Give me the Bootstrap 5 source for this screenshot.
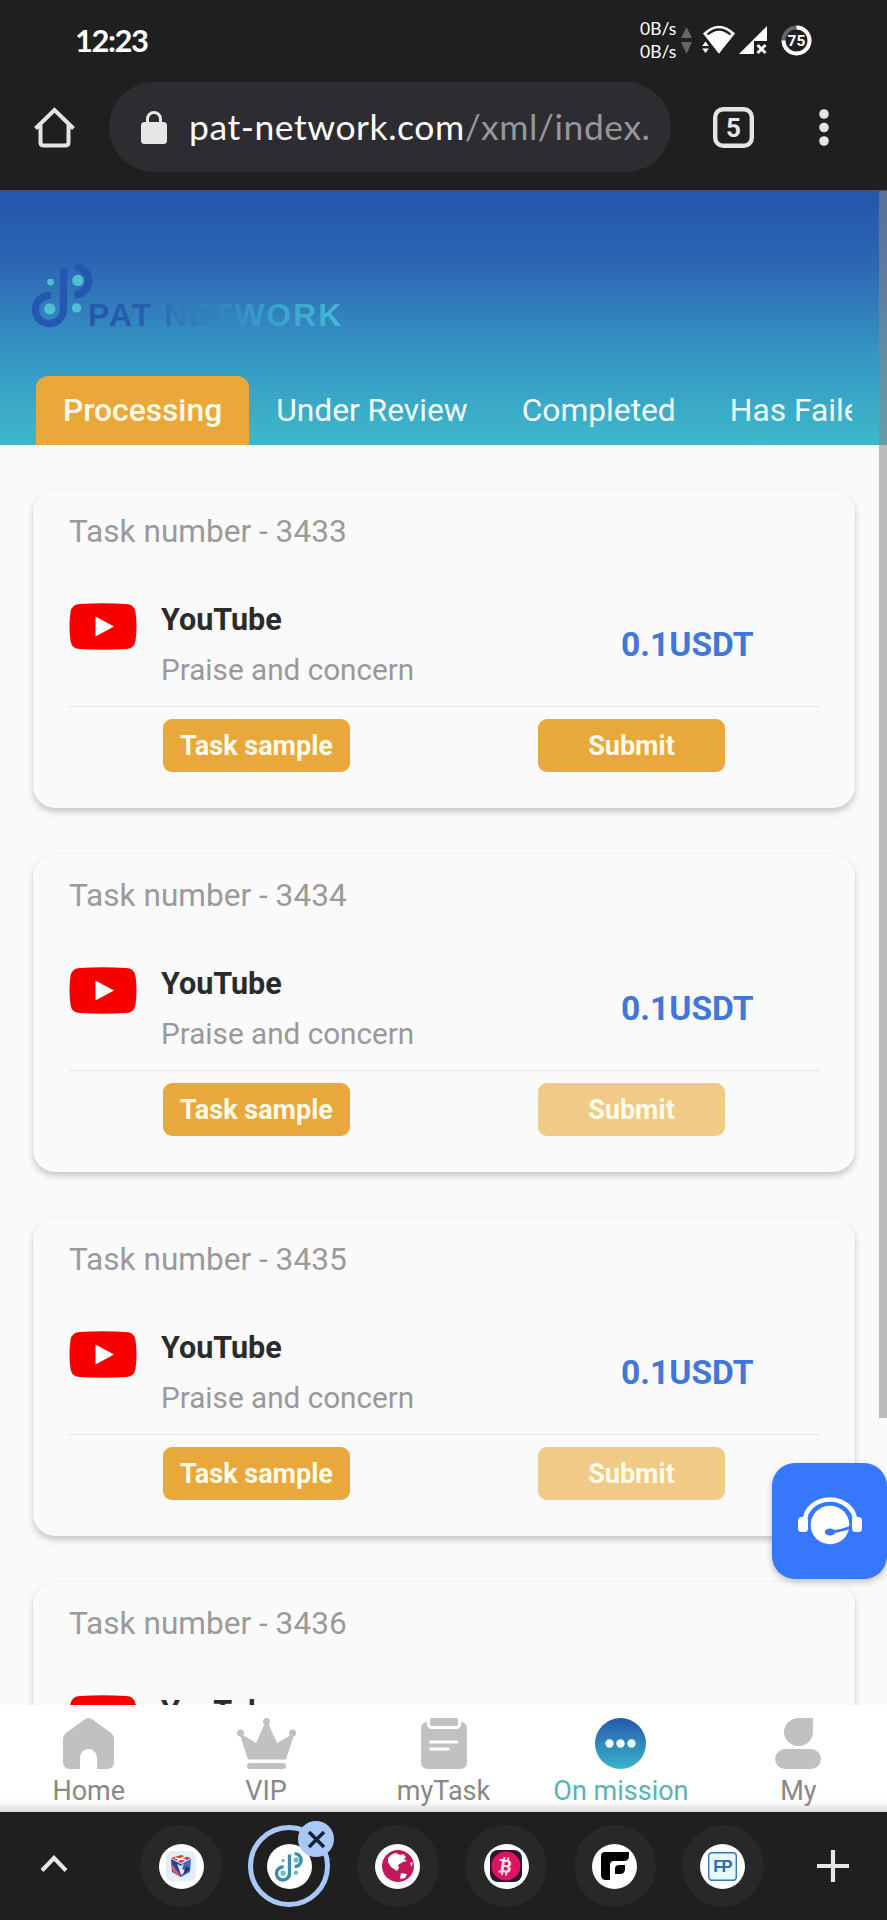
<!DOCTYPE html>
<html lang="en">
<head>
<meta charset="utf-8">
<meta name="viewport" content="width=device-width, initial-scale=1">
<title>PAT Network - On mission</title>
<link href="https://cdn.jsdelivr.net/npm/bootstrap@5.3.0/dist/css/bootstrap.min.css" rel="stylesheet">
<script src="https://cdn.jsdelivr.net/npm/bootstrap@5.3.0/dist/js/bootstrap.bundle.min.js" defer></script>
<style>
  html, body { height: 1920px; overflow: hidden; }
  body { font-family: Roboto, "Liberation Sans", sans-serif; background: #fafafa; }
  svg { display: block; flex: none; overflow: visible; }
  .chrome-top { height: 192px; background: #1f1f1f; border-bottom: 2px solid #454f6e; color: #fff; }
  .status { height: 82px; padding: 0 75px 0 75px; }
  .clock { font: 700 31px/38px Lato, sans-serif; letter-spacing: -1.5px; margin-top: -3px; }
  .rate { font: 400 17.5px/23px Lato, sans-serif; width: 38px; white-space: nowrap; margin-top: -2px; }
  .status svg { margin-top: -2px; }
  .toolbar { height: 90px; padding-left: 34px; }
  .omnibox { width: 562px; height: 90px; border-radius: 45px; background: #2d2c31; margin-left: 34px; padding-left: 32px; }
  .url { font: 400 35.5px/44px Lato, sans-serif; letter-spacing: .55px; margin-left: 22px; white-space: nowrap; }
  .url span { color: #97969b; }
  .site-head { height: 253px; padding: 69px 35px 0 30px; background: linear-gradient(#2356ae 0%, #2d66b4 28%, #3597c4 65%, #3fb8ca 100%); }
  .brand-name { font: 700 32px/36px "Liberation Sans", sans-serif; letter-spacing: 2px; color: transparent; margin: 36px 0 0 -9px; white-space: nowrap;
    background: linear-gradient(90deg, #2556ad 0%, #2760b0 24%, #3079b7 36%, #3287be 52%, #38a3ca 72%, #43b9d3 100%); -webkit-background-clip: text; background-clip: text; }
  .tabs { height: 69px; margin: 46px 0 0 6px; overflow: hidden; flex-wrap: nowrap; }
  .tabs a { font-size: 31.75px; line-height: 65px; color: #f2fdfd; padding: 2px 27px; white-space: nowrap; text-decoration: none; }
  .tabs a.on { background: #eba83a; border-radius: 12px 12px 0 0; font-weight: 500; color: #fffbe9; }
  .feed { height: 1260px; overflow: hidden; padding: 45px 32px 0 33px; gap: 46px; }
  .task { height: 318px; flex: none; border: 0; border-radius: 22px; background: #fafafa; padding: 22px 35px 0 36px; box-shadow: 0 4px 6px rgba(0,0,0,.2), 0 0 2px rgba(0,0,0,.05); }
  .task-no { font-size: 31.6px; line-height: 40px; color: #9a9a9a; }
  .media { height: 112px; margin-top: 43px; border-bottom: 1px solid #e4e6e8; font-size: 29.7px; line-height: 50px; }
  .media svg { margin-top: 8px; }
  .about { margin-left: 24px; width: 460px; color: #999; }
  .about strong { display: block; font-weight: 700; font-size: 30.5px; color: #2b2b2b; }
  .price { font-weight: 700; font-size: 33.6px; line-height: 100px; color: #4177d8; }
  .act { width: 187px; height: 53px; margin-top: 12px; padding: 0; border: 0; border-radius: 9px; background: #e9a83b; color: #fffbeb; font-weight: 700; font-size: 27px; line-height: 52px; }
  .act:disabled { background: #f0ca86; color: #fffbeb; opacity: 1; }
  .app-nav { height: 107px; padding-top: 13px; background: linear-gradient(#fff 0 90px, #fbfbfb 98px, #d8d8d8 107px); }
  .app-nav a { font-size: 27px; line-height: 32px; color: #888; text-decoration: none; }
  .app-nav a.on { color: #56b5b1; }
  .app-nav svg { height: 51px; margin-bottom: 6px; }
  .tabstrip { height: 108px; background: #1f1f1f; padding: 0 38px 0 40px; }
  .site { width: 82px; height: 82px; border-radius: 50%; background: #282828; margin-right: 26.4px; flex: none; }
  .site.on { background: #1f1f1f; border: 5px solid #a9c7f7; }
  .fav { width: 45px; height: 45px; border-radius: 50%; background: #fff; }
  .close-dot { width: 36px; height: 36px; border-radius: 50%; background: #a9c7f7; top: -9px; right: -9px; }
  .thumb { width: 8px; height: 1227px; top: 191px; right: 0; background: rgba(135,135,135,.55); }
  .fab { width: 115px; height: 116px; top: 1463px; right: 0; border-radius: 23px; background: #3777fb; box-shadow: 0 3px 7px rgba(0,0,0,.22); }
</style>
</head>
<body class="position-relative d-flex flex-column">
<svg width="0" height="0" class="position-absolute">
  <defs>
    <linearGradient id="sea" x1="0" y1="0" x2="0" y2="1"><stop offset="0" stop-color="#2559ae"/><stop offset="1" stop-color="#3ab5c8"/></linearGradient>
    <symbol id="yt" viewBox="0 0 68 47">
      <path fill="#f80000" d="M11 1Q34-.5 57 1Q65 1 66.500 9Q68.500 23 66.500 38Q65 46 57 46Q34 47.500 11 46Q3 46 1.500 38Q-.5 23 1.500 9Q3 1 11 1Z"/>
      <path fill="#fff" d="M26.500 13.500V33.500L45 23.500Z"/>
    </symbol>
    <symbol id="dp" viewBox="90 62 200 200">
      <g fill="none" stroke="currentColor" stroke-width="22">
        <path d="M190 84V207A42 42 0 1 1 152 165"/>
        <path d="M223 79A42 42 0 1 1 223 163"/>
      </g>
    </symbol>
  </defs>
</svg>

<header class="chrome-top">
  <div class="status d-flex align-items-center">
    <div class="clock">12:23</div>
    <div class="rate ms-auto">0B/s<br>0B/s</div>
    <svg width="11" height="27" viewBox="0 0 11 27" fill="#666" style="margin-left:3px"><path d="M5.500 0L11 11H0ZM5.500 27L11 15H0Z"/></svg>
    <svg width="34" height="30" viewBox="0 0 34 30" style="margin-left:10px">
      <path fill="#fff" d="M1 8.500Q17-7 33 8.500L17 28.500Z"/>
      <path d="M5.500 9.500Q17-.500 28.500 9.500" fill="none" stroke="#1f1f1f" stroke-width="2.200"/>
      <path d="M-1 15H5.500L11 22V30H-1Z" fill="#1f1f1f"/>
      <path fill="#fff" d="M8 17L17 28.500L19 26L12 15Z"/>
      <path d="M3.500 16.500L6.800 21H.2ZM3.500 28L6.800 23.500H.2Z" fill="#fff"/>
    </svg>
    <svg width="28" height="28" viewBox="0 0 28 28" style="margin-left:3px">
      <path fill="#fff" d="M28 0V15H15V28H0Z"/><path d="M18.500 19L26.500 27M26.500 19L18.500 27" stroke="#fff" stroke-width="3"/>
    </svg>
    <svg width="31" height="31" viewBox="0 0 31 31" style="margin-left:14px">
      <circle cx="15.500" cy="15.500" r="13" fill="none" stroke="#666" stroke-width="4"/>
      <path d="M15.500 2.500A13 13 0 1 1 2.500 15.500" fill="none" stroke="#fff" stroke-width="4"/>
      <text x="15.500" y="21" text-anchor="middle" font-family="Roboto" font-weight="700" font-size="15.500" fill="#fff">75</text>
    </svg>
  </div>
  <div class="toolbar d-flex align-items-center">
    <svg width="41" height="41" viewBox="0 0 41 41" fill="none" stroke="#e4e4e4" stroke-width="4"><path d="M1.500 21.500L20.500 3L39.500 21.500M6.500 18V35.500Q6.500 38.500 9.500 38.500H31Q34.500 38.500 34.500 35.500V18"/></svg>
    <div class="omnibox d-flex align-items-center">
      <svg width="26" height="33" viewBox="0 0 26 33"><rect y="11" width="26" height="22" rx="3.500" fill="#e6e6e6"/><path d="M6.500 12V8A6.500 6.500 0 0 1 19.500 8V12" fill="none" stroke="#e6e6e6" stroke-width="3"/></svg>
      <div class="url">pat-network.com<span>/xml/index.</span></div>
    </div>
    <svg width="41" height="41" viewBox="0 0 41 41" style="margin-left:42px"><rect x="2.200" y="2.200" width="36.600" height="36.600" rx="8" fill="none" stroke="#e4e4e4" stroke-width="4.400"/><text x="20.500" y="30" text-anchor="middle" font-family="Roboto" font-size="26" font-weight="700" fill="#e8e8e8">5</text></svg>
    <svg width="10" height="37" viewBox="0 0 10 37" fill="#e4e4e4" style="margin-left:65px"><circle cx="5" cy="5" r="4.800"/><circle cx="5" cy="18.500" r="4.800"/><circle cx="5" cy="32" r="4.800"/></svg>
  </div>
</header>

<section class="site-head">
  <div class="d-flex" style="height:69px">
    <svg width="67" height="67" viewBox="90 62 200 200"><use href="#dp" x="90" y="62" width="200" height="200" color="#2457b0"/>
      <g fill="#50bfd6"><circle cx="151" cy="125" r="10"/><circle cx="233" cy="120" r="17"/><circle cx="149" cy="205" r="17"/><circle cx="229" cy="202" r="14"/></g></svg>
    <div class="brand-name">PAT NETWORK</div>
  </div>
  <nav class="tabs d-flex">
    <a href="#" class="on">Processing</a><a href="#">Under Review</a><a href="#">Completed</a><a href="#">Has Failed</a>
  </nav>
</section>

<main class="feed d-flex flex-column">
  <article class="task card"><div class="task-no">Task number - 3433</div>
    <div class="media d-flex"><svg width="68" height="47"><use href="#yt"/></svg><div class="about"><strong>YouTube</strong>Praise and concern</div><div class="price">0.1USDT</div></div>
    <div class="d-flex justify-content-between" style="padding:0 95px 0 94px"><button class="btn act">Task sample</button><button class="btn act">Submit</button></div>
  </article>
  <article class="task card"><div class="task-no">Task number - 3434</div>
    <div class="media d-flex"><svg width="68" height="47"><use href="#yt"/></svg><div class="about"><strong>YouTube</strong>Praise and concern</div><div class="price">0.1USDT</div></div>
    <div class="d-flex justify-content-between" style="padding:0 95px 0 94px"><button class="btn act">Task sample</button><button class="btn act" disabled>Submit</button></div>
  </article>
  <article class="task card"><div class="task-no">Task number - 3435</div>
    <div class="media d-flex"><svg width="68" height="47"><use href="#yt"/></svg><div class="about"><strong>YouTube</strong>Praise and concern</div><div class="price">0.1USDT</div></div>
    <div class="d-flex justify-content-between" style="padding:0 95px 0 94px"><button class="btn act">Task sample</button><button class="btn act" disabled>Submit</button></div>
  </article>
  <article class="task card"><div class="task-no">Task number - 3436</div>
    <div class="media d-flex"><svg width="68" height="47"><use href="#yt"/></svg><div class="about"><strong>YouTube</strong></div></div>
  </article>
</main>

<nav class="app-nav d-flex position-relative">
  <a href="#" class="col d-flex flex-column align-items-center">
    <svg width="51" viewBox="0 0 51 51" fill="#c1c1c1"><path d="M21.500 1.500Q25.500-1.500 29.500 1.500L48 15Q51 17.500 51 21V44Q51 51 44 51H34V39.500A8.500 8.500 0 0 0 17 39.500V51H7Q0 51 0 44V21Q0 17.500 3 15Z"/></svg>Home</a>
  <a href="#" class="col d-flex flex-column align-items-center">
    <svg width="59" viewBox="0 0 59 51" fill="#c1c1c1"><circle cx="3.500" cy="15" r="3.500"/><circle cx="29.500" cy="3.500" r="3.500"/><circle cx="55.500" cy="15" r="3.500"/><path d="M28 5H31L40 25L54 17H57L49 41.500H11L3 17H6L19 25Z"/><rect x="10" y="45" width="39" height="6" rx="3"/></svg>VIP</a>
  <a href="#" class="col d-flex flex-column align-items-center">
    <svg width="46" viewBox="0 0 46 51"><path fill="#c1c1c1" d="M6 4V6Q6 11 11 11H35Q40 11 40 6V4Q46 5 46 10V44Q46 51 39 51H7Q0 51 0 44V10Q0 5 6 4Z"/><rect x="9" y="0" width="28" height="8" rx="2" fill="#c1c1c1"/><path d="M9.500 24H36M9.500 31H27" stroke="#fff" stroke-width="3" stroke-linecap="round"/></svg>myTask</a>
  <a href="#" class="on col d-flex flex-column align-items-center">
    <svg width="51" viewBox="0 0 51 51"><circle cx="25.500" cy="25.500" r="25.500" fill="url(#sea)"/><g fill="#eafcff"><circle cx="14.500" cy="25.500" r="4.200"/><circle cx="25.500" cy="25.500" r="4.200"/><circle cx="36.500" cy="25.500" r="4.200"/></g></svg>On mission</a>
  <a href="#" class="col d-flex flex-column align-items-center">
    <svg width="46" viewBox="0 0 46 51" fill="#c1c1c1"><path d="M24 0H38V14A14.500 14 0 1 1 24 0Z"/><rect y="31" width="46" height="20" rx="10"/></svg>My</a>
</nav>

<footer class="tabstrip d-flex align-items-center">
  <svg width="28" height="18" viewBox="0 0 28 18" fill="none" stroke="#e8e8e8" stroke-width="4" style="margin:0 72px 4px 0"><path d="M2 15.500L14 3L26 15.500"/></svg>
  <div class="site d-flex align-items-center justify-content-center"><div class="fav d-flex align-items-center justify-content-center">
    <svg width="30" height="30" viewBox="0 0 30 30"><rect width="30" height="30" rx="6" fill="#e2eef8"/><path d="M5 8L15 13V26L6 21Z" fill="#2b3f9c"/><path d="M25 8L15 13V26L24 21Z" fill="#3e6ac0"/><path d="M5 7L15 4L25 7L15 12Z" fill="#d8383b"/><path d="M9 7L20 9M20 5L11 10" stroke="#fff" stroke-width="1.500"/><path d="M5 12L12 21L15 26L7 21Z" fill="#e05a62"/><path d="M11 13L15 15L18 12L16 18L21 20L15 24L13 18Z" fill="#dbe6f8"/><path d="M20 15L24 18L17 24Z" fill="#33276f"/></svg></div></div>
  <div class="site on position-relative d-flex align-items-center justify-content-center"><div class="fav d-flex align-items-center justify-content-center">
    <svg width="31" height="31" viewBox="90 62 200 200"><use href="#dp" x="90" y="62" width="200" height="200" color="#3f8ba8"/><g fill="#63bfc8"><circle cx="149" cy="123" r="11"/><circle cx="233" cy="120" r="17"/><circle cx="149" cy="205" r="17"/><circle cx="232" cy="202" r="14"/></g></svg></div>
    <span class="close-dot position-absolute d-flex align-items-center justify-content-center"><svg width="17" height="17" viewBox="0 0 17 17" stroke="#14213a" stroke-width="3.500"><path d="M1 1L16 16M16 1L1 16"/></svg></span></div>
  <div class="site d-flex align-items-center justify-content-center"><div class="fav d-flex align-items-center justify-content-center">
    <svg width="32" height="32" viewBox="0 0 32 32"><circle cx="16" cy="16" r="16" fill="#c2185b"/><path fill="#fff" d="M6 8Q9 4 14 3L18 5L21 4L24 7L22 9L25 11L21 12L16 15L17 18L15 21L9 17L6 12Z"/><path fill="#fff" d="M19 23L25 24L23 28L18 29ZM28 13L30.500 12L30 17Z"/></svg></div></div>
  <div class="site d-flex align-items-center justify-content-center"><div class="fav d-flex align-items-center justify-content-center">
    <svg width="32" height="32" viewBox="0 0 32 32"><rect width="32" height="32" rx="8" fill="#24192f"/><circle cx="16" cy="16" r="14.500" fill="#e0115f"/><text x="16" y="22.500" text-anchor="middle" font-family="Roboto" font-size="18" font-weight="700" fill="#ffe1ec" transform="rotate(8 16 16)">B</text><path d="M14.500 7L14 11M18.500 7.500L18 11M12.500 21.500L12 25M16.500 22L16 25.500M9.500 10H13M8.500 21.500H12" stroke="#ffe1ec" stroke-width="1.800"/></svg></div></div>
  <div class="site d-flex align-items-center justify-content-center"><div class="fav d-flex align-items-center justify-content-center">
    <svg width="28" height="28" viewBox="0 0 28 28"><path d="M4 0H28V4Q28 9 23 9H13Q9 9 9 13V28H5Q0 28 0 23V4Q0 0 4 0ZM18 13H24V17Q24 22 19 22H14V17Q14 13 18 13Z"/></svg></div></div>
  <div class="site d-flex align-items-center justify-content-center"><div class="fav d-flex align-items-center justify-content-center">
    <svg width="29" height="29" viewBox="0 0 29 29"><rect x=".7" y=".7" width="27.600" height="27.600" rx="3" fill="#e9f8fd" stroke="#3b75b4" stroke-width="1.400"/><text x="14" y="19.500" text-anchor="middle" font-family="Liberation Sans" font-size="16.500" font-weight="700" letter-spacing="-1.700" fill="#2b6cb0">FP</text></svg></div></div>
  <svg class="ms-auto" width="32" height="32" viewBox="0 0 32 32" stroke="#e8e8e8" stroke-width="4.200"><path d="M0 16H32M16 0V32"/></svg>
</footer>

<div class="thumb position-absolute"></div>
<button class="fab position-absolute border-0 p-0 d-flex align-items-center justify-content-center" aria-label="Support">
  <svg width="64" height="48" viewBox="0 0 64 48"><path d="M7 24A25 21.500 0 0 1 57 24" fill="none" stroke="#fff" stroke-width="4.500"/><rect x="0" y="20" width="10" height="15" rx="3.500" fill="#fff"/><rect x="54" y="20" width="10" height="15" rx="3.500" fill="#fff"/><circle cx="32" cy="28" r="19.300" fill="#fff"/><path d="M53 30Q45 33.500 33 35" stroke="#3777fb" stroke-width="2.600" fill="none"/><ellipse cx="32" cy="35" rx="5.200" ry="3.600" fill="#3777fb"/></svg>
</button>
</body>
</html>
